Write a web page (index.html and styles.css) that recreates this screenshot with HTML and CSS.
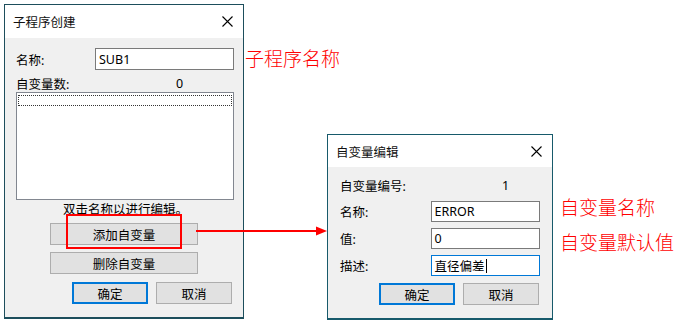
FILE: index.html
```html
<!DOCTYPE html>
<html lang="zh-CN">
<head>
    <meta charset="UTF-8">
    <meta name="viewport" content="width=device-width, initial-scale=1.0">
    <title>子程序创建</title>
    <link rel="stylesheet" href="styles.css">
</head>

<body>
    <!-- Subroutine dialog -->
    <div class="dialog dialog-sub">
        <div class="title-bar">
            <span class="title">子程序创建</span>
            <svg class="close" width="11" height="11" viewBox="0 0 11 11">
                <path d="M0.5 0.5 L10.5 10.5 M10.5 0.5 L0.5 10.5" stroke="#000" stroke-width="1.1" fill="none"/>
            </svg>
        </div>
        <div class="dialog-body">
            <div class="field-row">
                <label class="field-label">名称:</label>
                <div class="textbox sub-name">SUB1</div>
            </div>
            <div class="count-row">
                <span class="count-label">自变量数:</span>
                <span class="count-value">0</span>
            </div>
            <div class="listbox">
                <div class="focus-row"></div>
            </div>
            <div class="hint">双击名称以进行编辑。</div>
            <button class="btn btn-wide btn-add">添加自变量</button>
            <button class="btn btn-wide btn-del">删除自变量</button>
            <div class="btn-row sub-buttons">
                <button class="btn btn-small btn-default">确定</button>
                <button class="btn btn-small">取消</button>
            </div>
        </div>
    </div>

    <!-- Argument dialog -->
    <div class="dialog dialog-arg">
        <div class="title-bar">
            <span class="title">自变量编辑</span>
            <svg class="close" width="11" height="11" viewBox="0 0 11 11">
                <path d="M0.5 0.5 L10.5 10.5 M10.5 0.5 L0.5 10.5" stroke="#000" stroke-width="1.1" fill="none"/>
            </svg>
        </div>
        <div class="dialog-body">
            <div class="count-row">
                <span class="arg-label">自变量编号:</span>
                <span class="count-value">1</span>
            </div>
            <div class="arg-row first">
                <label class="arg-label">名称:</label>
                <div class="textbox arg-input">ERROR</div>
            </div>
            <div class="arg-row">
                <label class="arg-label">值:</label>
                <div class="textbox arg-input">0</div>
            </div>
            <div class="arg-row">
                <label class="arg-label">描述:</label>
                <div class="textbox arg-input focused">直径偏差<span class="caret"></span></div>
            </div>
            <div class="btn-row arg-buttons">
                <button class="btn btn-small btn-default">确定</button>
                <button class="btn btn-small">取消</button>
            </div>
        </div>
    </div>

    <!-- Annotations -->
    <div class="mark-box"></div>
    <svg class="arrow" width="132" height="12" viewBox="0 0 132 12">
        <line x1="0" y1="6" x2="122" y2="6" stroke="#f00" stroke-width="2"/>
        <polygon points="120,1.5 131,6 120,10.5" fill="#f00"/>
    </svg>
    <span class="note note-sub">子程序名称</span>
    <span class="note note-name">自变量名称</span>
    <span class="note note-value">自变量默认值</span>
</body>
</html>
```

FILE: styles.css
```css
/* Page */
body {
    margin: 0;
    width: 680px;
    height: 327px;
    background: #fff;
    position: relative;
    overflow: hidden;
    font-family: "Noto Sans", "Noto Sans CJK SC", sans-serif;
    font-size: 12.5px;
    color: #000;
}

/* Windows on the screenshot */
.dialog {
    position: absolute;
    box-sizing: border-box;
    background: #f0f0f0;
    border: 1px solid #1d4e5c;
    border-bottom-width: 2px;
    display: flex;
    flex-direction: column;
}

.dialog-sub {
    left: 4px;
    top: 4px;
    width: 240px;
    height: 315px;
}

.dialog-arg {
    left: 327px;
    top: 134px;
    width: 226px;
    height: 186px;
    border-color: #175a6b;
}

.title-bar {
    background: #fff;
    height: 33px;
    display: flex;
    align-items: center;
    justify-content: space-between;
    padding: 0 10px 0 8px;
    flex-shrink: 0;
}

.dialog-arg .title-bar {
    height: 32px;
}

.title {
    font-family: "Noto Sans CJK SC", sans-serif;
    font-size: 12.5px;
    color: #111;
}

.close {
    display: block;
}

.dialog-body {
    display: flex;
    flex-direction: column;
    padding: 10px 8px 0 11px;
}

/* Text boxes */
.textbox {
    box-sizing: border-box;
    background: #fff;
    border: 1px solid #7a7a7a;
    padding: 0 3px;
    display: flex;
    align-items: center;
    white-space: nowrap;
}

.textbox.focused {
    border-color: #0078d7;
}

.caret {
    display: inline-block;
    width: 1px;
    height: 14px;
    background: #000;
    margin-left: 1px;
}

/* Subroutine dialog rows */
.field-row {
    display: flex;
    align-items: center;
    height: 22px;
}

.field-label {
    width: 79px;
}

.sub-name {
    width: 139px;
    height: 22px;
}

.count-row {
    display: flex;
    align-items: center;
    height: 14px;
    margin-top: 6px;
}

.count-label {
    width: 160px;
}

.listbox {
    box-sizing: border-box;
    height: 108px;
    margin-top: 2px;
    margin-right: 1px;
    background: #fff;
    border: 1px solid #828790;
    padding: 2px 1px;
}

.focus-row {
    height: 11px;
    border: 1px dotted #333;
    box-sizing: border-box;
}

.hint {
    height: 14px;
    line-height: 14px;
    margin-top: 3px;
    text-align: center;
}

/* Buttons */
.btn {
    box-sizing: border-box;
    height: 22px;
    padding: 0;
    background: #e1e1e1;
    border: 1px solid #adadad;
    font-family: "Noto Sans CJK SC", sans-serif;
    font-size: 12.5px;
    color: #000;
}

.btn-default {
    border: 2px solid #0078d7;
}

.btn-wide {
    width: 148px;
    margin-left: 34px;
}

.btn-add {
    margin-top: 6px;
}

.btn-del {
    margin-top: 7px;
}

.btn-small {
    width: 76px;
}

.btn-row {
    display: flex;
    gap: 8px;
}

.sub-buttons {
    margin-top: 8px;
    padding-left: 56px;
}

/* Argument dialog rows */
.dialog-arg .dialog-body {
    padding: 11px 12px 0 12px;
}

.dialog-arg .count-row {
    margin-top: 0;
}

.arg-label {
    width: 162px;
}

.arg-row {
    display: flex;
    align-items: center;
    height: 21px;
    margin-top: 6px;
}

.arg-row.first {
    margin-top: 9px;
}

.arg-row .arg-label {
    width: 91px;
}

.arg-input {
    width: 110px;
    height: 21px;
}

.arg-buttons {
    margin-top: 7px;
    padding-left: 39px;
}

/* Red annotations over the picture */
.mark-box {
    position: absolute;
    left: 66px;
    top: 214px;
    width: 116px;
    height: 35px;
    box-sizing: border-box;
    border: 2px solid #f00;
}

.arrow {
    position: absolute;
    left: 196px;
    top: 225px;
}

.note {
    position: absolute;
    font-family: "Noto Sans CJK SC", sans-serif;
    font-size: 19px;
    font-weight: 300;
    line-height: 22px;
    color: #f00;
    white-space: nowrap;
}

.note-sub {
    left: 245px;
    top: 47px;
}

.note-name {
    left: 560px;
    top: 196px;
}

.note-value {
    left: 560px;
    top: 231px;
}
```
